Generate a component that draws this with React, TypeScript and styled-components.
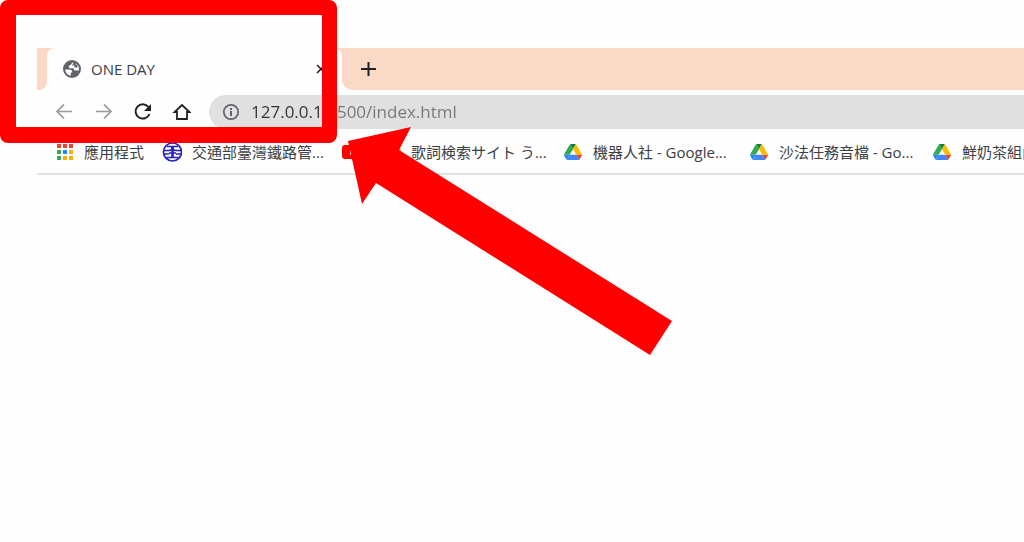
import React from "react";
import styled, { createGlobalStyle } from "styled-components";

const PEACH = "#fbd9c7";
const RED = "#ff0000";

const GlobalStyle = createGlobalStyle`
  * { box-sizing: border-box; }
  body {
    margin: 0;
    background: #fefefe;
    color: #3c4043;
    font-family: "Open Sans", "Noto Sans CJK TC", sans-serif;
    overflow-x: hidden;
  }
`;

const Page = styled.div`
  position: relative;
  min-height: 100vh;
  overflow: hidden;
`;

const Browser = styled.main`
  padding: 48px 0 0 37px;
`;

const TabStrip = styled.div`
  display: flex;
  height: 42px;
`;

const StripEdge = styled.div`
  width: 10px;
  background: ${PEACH};
  border-bottom-right-radius: 8px;
`;

const TabSlot = styled.div`
  width: 295px;
  background: linear-gradient(${PEACH} 10px, transparent 10px);
`;

const Tab = styled.div`
  display: flex;
  align-items: center;
  gap: 10px;
  height: 100%;
  padding: 0 15px 0 16px;
  border-radius: 8px 8px 0 0;
  background: #fefefe;
`;

const TabTitle = styled.span`
  flex: 1;
  font-size: 15px;
  line-height: 20px;
`;

const StripRest = styled.div`
  display: flex;
  align-items: center;
  flex: 1;
  padding-left: 16px;
  background: ${PEACH};
  border-bottom-left-radius: 10px;
`;

const IconButton = styled.button<{ $size: number; $muted?: boolean }>`
  display: flex;
  align-items: center;
  justify-content: center;
  flex: none;
  width: ${(p) => p.$size}px;
  height: ${(p) => p.$size}px;
  padding: 0;
  border: 0;
  background: none;
  color: ${(p) => (p.$muted ? "#999999" : "#202124")};
`;

const Toolbar = styled.div`
  display: flex;
  align-items: center;
  height: 44px;
  padding-left: 17px;
`;

const NavButtons = styled.div`
  display: flex;
  gap: 19px;
  margin-right: 18px;
`;

const AddressBar = styled.label`
  display: flex;
  align-items: center;
  flex: 1;
  gap: 11px;
  height: 34px;
  padding-left: 13px;
  border-radius: 17px 0 0 17px;
  background: #e0e0e0;
  color: #5f6368;
`;

const AddressInput = styled.input`
  flex: 1;
  min-width: 0;
  padding: 0;
  border: 0;
  outline: 0;
  font-family: inherit;
  font-size: 17px;
  line-height: 24px;
  color: #777777;
  background: linear-gradient(90deg, #333333 80px, #777777 80px);
  background-clip: text;
  -webkit-background-clip: text;
  -webkit-text-fill-color: transparent;
`;

const Bookmarks = styled.nav`
  display: flex;
  align-items: center;
  height: 41px;
  padding: 0 0 4px 17px;
  border-bottom: 2px solid #e0e2e1;
  overflow: hidden;
`;

const Bookmark = styled.a<{ $width: number }>`
  display: flex;
  align-items: center;
  flex: none;
  gap: 10px;
  width: ${(p) => p.$width}px;
  color: inherit;
  text-decoration: none;
  font-size: 15px;
  line-height: 22px;
  white-space: nowrap;
`;

const MarkerFrame = styled.div`
  position: absolute;
  top: 0;
  left: 0;
  width: 337px;
  height: 143px;
  border: 15px solid ${RED};
  border-bottom-width: 16px;
  border-left-width: 16px;
  border-radius: 8px;
  pointer-events: none;
`;

const MarkerArrow = styled.svg`
  position: absolute;
  top: 127px;
  left: 348px;
  pointer-events: none;
`;

const Globe = () => (
  <svg width="18" height="18" viewBox="0 0 18 18" aria-hidden>
    <circle cx="9" cy="9" r="9" fill="#5f6368" />
    <path
      d="M10.500 2.200C8 3 9 4.500 7 5.200C5 5.800 5.500 8.200 7.500 8.200H9.500C11.500 8.200 10.500 10.500 12.500 10.500H15.800A7 7 0 0 0 12.800 3.300C13 4.500 12 5 11 5C10 5 10 6 9 6"
      fill="#fefefe"
    />
    <path d="M2.200 9.500H6.500C8.500 9.500 9.500 11 9.200 12.500H7.800V15.800A7 7 0 0 1 2.200 9.500z" fill="#fefefe" />
    <path d="M11 4.500h3.500v3h-3z" fill="#5f6368" />
  </svg>
);

const AppsIcon = () => {
  const colors = ["#ea4335", "#ea4335", "#ea4335", "#34a853", "#1e88ff", "#fbac05", "#34a853", "#fbac05", "#fbac05"];
  return (
    <svg width="20" height="20" viewBox="0 0 20 20" aria-hidden>
      {colors.map((c, i) => (
        <rect key={i} x={3 + (i % 3) * 6} y={2 + Math.floor(i / 3) * 6} width="4" height="4" fill={c} />
      ))}
    </svg>
  );
};

const RailwayIcon = () => (
  <svg width="20" height="20" viewBox="0 0 20 20" fill="none" stroke="#2222bb" strokeWidth="1.700" aria-hidden>
    <circle cx="10.500" cy="10" r="9" />
    <path d="M5 4.500h11M2 8.500h5q3.500 0 3.500-3.500q0 3.500 3.500 3.500h5M2 12h5M14 12h5M7 11h7M4.500 15.500h12" />
    <path d="M10.500 4v12" strokeWidth="2.500" />
  </svg>
);

const VideoIcon = () => (
  <svg width="20" height="20" viewBox="0 0 20 20" aria-hidden>
    <rect y="3" width="20" height="14" rx="3" fill={RED} />
    <path d="M8 7v6l5-3z" fill="#fff" />
  </svg>
);

const LyricsIcon = () => (
  <svg width="20" height="20" viewBox="0 0 20 20" aria-hidden>
    <circle cx="10" cy="10" r="10" fill="#f9a01b" />
  </svg>
);

const DriveIcon = () => (
  <svg width="20" height="16" viewBox="0 0 87.300 78" aria-hidden>
    <path d="m6.600 66.850 3.850 6.650c.8 1.400 1.950 2.500 3.300 3.300l13.750-23.800h-27.500c0 1.550.4 3.100 1.200 4.500z" fill="#2684fc" />
    <path d="m43.650 25-13.750-23.800c-1.350.8-2.500 1.900-3.300 3.300l-25.400 44a9.060 9.060 0 0 0 -1.200 4.500h27.500z" fill="#34a853" />
    <path d="m73.550 76.800c1.350-.8 2.500-1.900 3.300-3.300l1.600-2.750 7.650-13.250c.8-1.400 1.200-2.950 1.200-4.500h-27.502l5.852 11.500z" fill="#ea4335" />
    <path d="m43.650 25 13.750-23.800c-1.350-.8-2.900-1.200-4.500-1.200h-18.500c-1.600 0-3.150.45-4.500 1.200z" fill="#188038" />
    <path d="m59.800 53h-32.300l-13.750 23.800c1.350.8 2.900 1.200 4.500 1.200h50.800c1.600 0 3.150-.45 4.500-1.200z" fill="#4285f4" />
    <path d="m73.400 26.500-12.700-22c-.8-1.400-1.950-2.500-3.300-3.300l-13.750 23.800 16.150 28h27.450c0-1.550-.4-3.100-1.200-4.500z" fill="#fbbc04" />
  </svg>
);

const bookmarks = [
  { label: "應用程式", Icon: AppsIcon, width: 108 },
  { label: "交通部臺灣鐵路管...", Icon: RailwayIcon, width: 180 },
  { label: "", Icon: VideoIcon, width: 39 },
  { label: "歌詞検索サイト う...", Icon: LyricsIcon, width: 182 },
  { label: "機器人社 - Google...", Icon: DriveIcon, width: 186 },
  { label: "沙法任務音檔 - Go...", Icon: DriveIcon, width: 183 },
  { label: "鮮奶茶組內", Icon: DriveIcon, width: 183 },
];

export default function App() {
  return (
    <Page>
      <GlobalStyle />
      <Browser>
        <TabStrip>
          <StripEdge />
          <TabSlot>
            <Tab>
              <Globe />
              <TabTitle>ONE DAY</TabTitle>
              <IconButton $size={12} aria-label="Close tab">
                <svg width="12" height="12" viewBox="0 0 12 12" stroke="currentColor" strokeWidth="1.600">
                  <path d="M2 2l8 8M10 2l-8 8" />
                </svg>
              </IconButton>
            </Tab>
          </TabSlot>
          <StripRest>
            <IconButton $size={20} aria-label="New tab">
              <svg width="20" height="20" viewBox="0 0 20 20" stroke="currentColor" strokeWidth="2">
                <path d="M3 10h15M10.500 3v14" />
              </svg>
            </IconButton>
          </StripRest>
        </TabStrip>
        <Toolbar>
          <NavButtons>
            <IconButton $size={20} $muted aria-label="Back">
              <svg width="20" height="20" viewBox="0 0 20 20" fill="none" stroke="currentColor" strokeWidth="1.700">
                <path d="M18 9.500H3M10 2.500l-7 7 7 7" />
              </svg>
            </IconButton>
            <IconButton $size={20} $muted aria-label="Forward">
              <svg width="20" height="20" viewBox="0 0 20 20" fill="none" stroke="currentColor" strokeWidth="1.700">
                <path d="M3 9.500h15M11 2.500l7 7-7 7" />
              </svg>
            </IconButton>
            <IconButton $size={20} aria-label="Reload">
              <svg width="20" height="20" viewBox="0 0 20 20" fill="none" stroke="currentColor" strokeWidth="2">
                <path d="M16.500 5a7.200 7.200 0 1 0 1 7" />
                <path d="M19 2v7h-7z" fill="currentColor" stroke="none" />
              </svg>
            </IconButton>
            <IconButton $size={20} aria-label="Home">
              <svg width="20" height="20" viewBox="0 0 20 20" fill="none" stroke="currentColor" strokeWidth="1.800">
                <path d="M6 17V10H3.500L11 3l7.500 7H16v7z" />
              </svg>
            </IconButton>
          </NavButtons>
          <AddressBar>
            <svg width="18" height="18" viewBox="0 0 18 18" fill="none" stroke="currentColor" strokeWidth="1.700" aria-hidden>
              <circle cx="9" cy="9" r="7.200" />
              <path d="M9 8v5M9 5v2" strokeWidth="2" />
            </svg>
            <AddressInput aria-label="Address" defaultValue="127.0.0.1:5500/index.html" />
          </AddressBar>
        </Toolbar>
        <Bookmarks>
          {bookmarks.map(({ label, Icon, width }, i) => (
            <Bookmark key={i} href="#" $width={width} aria-label={label || "Video"}>
              <Icon />
              {label && <span>{label}</span>}
            </Bookmark>
          ))}
        </Bookmarks>
      </Browser>
      <MarkerFrame />
      <MarkerArrow width="324" height="229" viewBox="0 0 324 229" fill={RED} aria-hidden>
        <path d="M0 14L63 0L51 23L324 194L302 228L28 56L14 77z" />
      </MarkerArrow>
    </Page>
  );
}
